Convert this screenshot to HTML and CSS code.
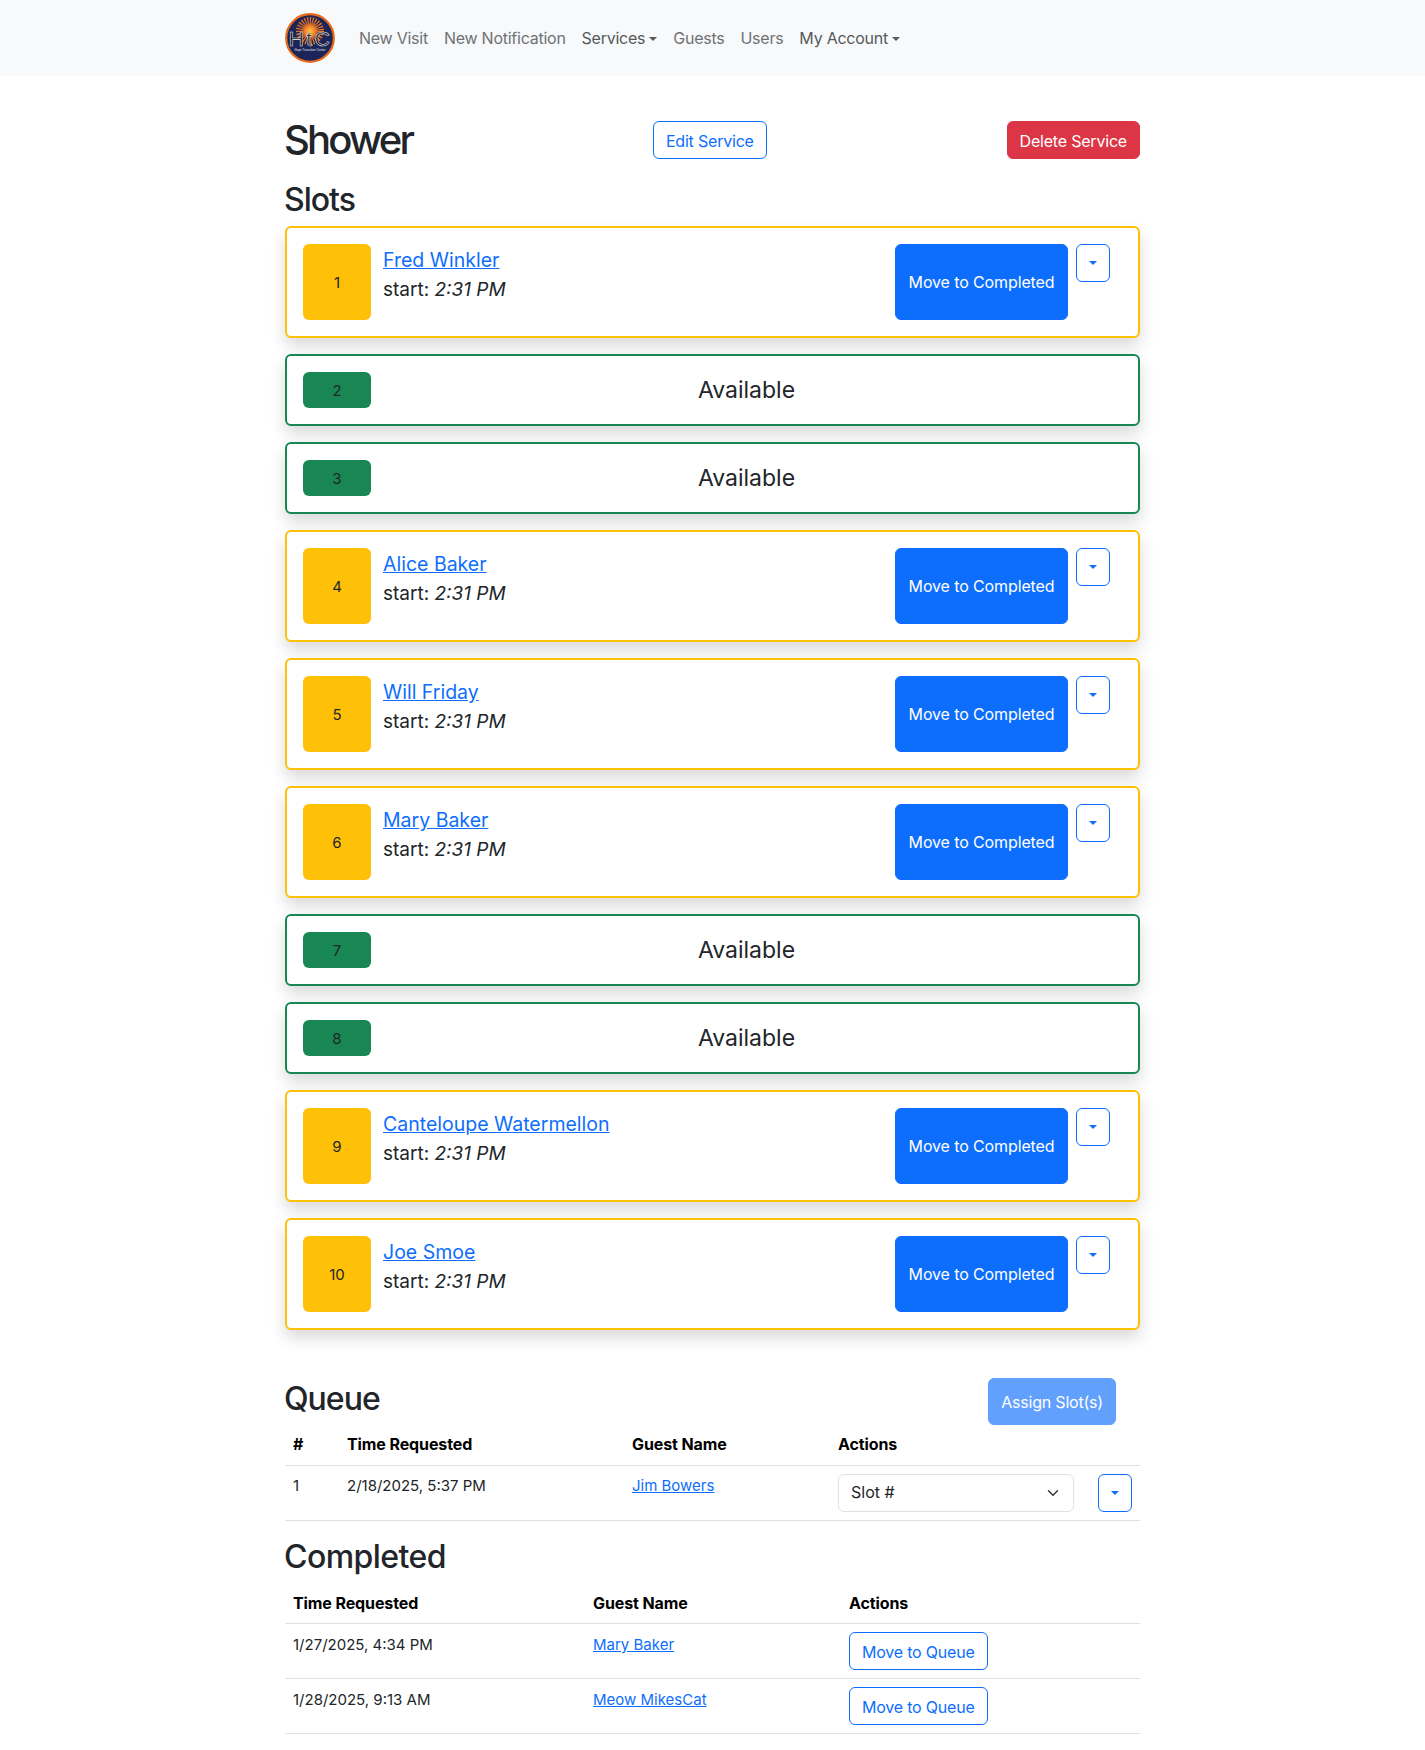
FILE: index.html
```html
<!DOCTYPE html>
<html lang="en">
<head>
<meta charset="utf-8">
<title>Shower</title>
<link rel="stylesheet" href="styles.css">
</head>
<body>
<nav class="navbar">
  <div class="wrap nav-inner">
    <svg class="logo" viewBox="0 0 50 50" role="img" aria-label="HTC">
      <defs>
        <radialGradient id="sun" cx="50%" cy="50%" r="50%">
          <stop offset="0" stop-color="#ffc04d"/>
          <stop offset="0.55" stop-color="#ef7d22"/>
          <stop offset="1" stop-color="#c9602a" stop-opacity="0"/>
        </radialGradient>
      </defs>
      <circle class="logo-disc" cx="25" cy="25" r="23.8"/>
      <circle class="logo-rays" cx="25" cy="18" r="9"/>
      <circle cx="25" cy="18" r="10" fill="url(#sun)"/>
      <text class="logo-text" x="25.5" y="33" text-anchor="middle">HtC</text>
      <text class="logo-sub" x="25" y="37.5" text-anchor="middle">Hope Transition Center</text>
    </svg>
    <a class="nav-link" href="#">New Visit</a>
    <a class="nav-link" href="#">New Notification</a>
    <a class="nav-link nav-dark caret-after" href="#">Services</a>
    <a class="nav-link" href="#">Guests</a>
    <a class="nav-link" href="#">Users</a>
    <a class="nav-link nav-dark caret-after" href="#">My Account</a>
  </div>
</nav>

<main class="wrap">
  <div class="title-row">
    <h1>Shower</h1>
    <a class="btn btn-outline" href="#">Edit Service</a>
    <a class="btn btn-danger" href="#">Delete Service</a>
  </div>

  <h2 class="slots-title">Slots</h2>
  <div class="slots">
    <div class="slot slot-busy">
      <div class="badge badge-busy">1</div>
      <div class="slot-info"><a class="guest" href="#">Fred Winkler</a><p class="start">start: <em>2:31 PM</em></p></div>
      <a class="btn btn-primary btn-complete" href="#">Move to Completed</a>
      <button class="btn btn-outline caret-btn" type="button"></button>
    </div>
    <div class="slot slot-free">
      <div class="badge badge-free">2</div>
      <div class="available">Available</div>
    </div>
    <div class="slot slot-free">
      <div class="badge badge-free">3</div>
      <div class="available">Available</div>
    </div>
    <div class="slot slot-busy">
      <div class="badge badge-busy">4</div>
      <div class="slot-info"><a class="guest" href="#">Alice Baker</a><p class="start">start: <em>2:31 PM</em></p></div>
      <a class="btn btn-primary btn-complete" href="#">Move to Completed</a>
      <button class="btn btn-outline caret-btn" type="button"></button>
    </div>
    <div class="slot slot-busy">
      <div class="badge badge-busy">5</div>
      <div class="slot-info"><a class="guest" href="#">Will Friday</a><p class="start">start: <em>2:31 PM</em></p></div>
      <a class="btn btn-primary btn-complete" href="#">Move to Completed</a>
      <button class="btn btn-outline caret-btn" type="button"></button>
    </div>
    <div class="slot slot-busy">
      <div class="badge badge-busy">6</div>
      <div class="slot-info"><a class="guest" href="#">Mary Baker</a><p class="start">start: <em>2:31 PM</em></p></div>
      <a class="btn btn-primary btn-complete" href="#">Move to Completed</a>
      <button class="btn btn-outline caret-btn" type="button"></button>
    </div>
    <div class="slot slot-free">
      <div class="badge badge-free">7</div>
      <div class="available">Available</div>
    </div>
    <div class="slot slot-free">
      <div class="badge badge-free">8</div>
      <div class="available">Available</div>
    </div>
    <div class="slot slot-busy">
      <div class="badge badge-busy">9</div>
      <div class="slot-info"><a class="guest" href="#">Canteloupe Watermellon</a><p class="start">start: <em>2:31 PM</em></p></div>
      <a class="btn btn-primary btn-complete" href="#">Move to Completed</a>
      <button class="btn btn-outline caret-btn" type="button"></button>
    </div>
    <div class="slot slot-busy">
      <div class="badge badge-busy">10</div>
      <div class="slot-info"><a class="guest" href="#">Joe Smoe</a><p class="start">start: <em>2:31 PM</em></p></div>
      <a class="btn btn-primary btn-complete" href="#">Move to Completed</a>
      <button class="btn btn-outline caret-btn" type="button"></button>
    </div>
  </div>

  <div class="queue-head">
    <h2 class="queue-title">Queue</h2>
    <a class="btn btn-primary btn-assign" href="#">Assign Slot(s)</a>
  </div>
  <table class="table table-queue">
    <thead>
      <tr><th class="q-num">#</th><th class="q-time">Time Requested</th><th class="q-guest">Guest Name</th><th>Actions</th></tr>
    </thead>
    <tbody>
      <tr>
        <td>1</td><td>2/18/2025, 5:37 PM</td><td><a href="#">Jim Bowers</a></td>
        <td>
          <div class="queue-actions">
            <select class="slot-select"><option>Slot #</option></select>
            <button class="btn btn-outline caret-btn" type="button"></button>
          </div>
        </td>
      </tr>
    </tbody>
  </table>

  <h2 class="completed-title">Completed</h2>
  <table class="table table-completed">
    <thead>
      <tr><th class="c-time">Time Requested</th><th class="c-guest">Guest Name</th><th>Actions</th></tr>
    </thead>
    <tbody>
      <tr><td>1/27/2025, 4:34 PM</td><td><a href="#">Mary Baker</a></td><td class="cell-action"><a class="btn btn-outline" href="#">Move to Queue</a></td></tr>
      <tr><td>1/28/2025, 9:13 AM</td><td><a href="#">Meow MikesCat</a></td><td class="cell-action"><a class="btn btn-outline" href="#">Move to Queue</a></td></tr>
    </tbody>
  </table>
</main>
</body>
</html>
```
FILE: styles.css
```css
* { box-sizing: border-box; }
html, body { margin: 0; padding: 0; }
body {
  font-family: "Inter", "Noto Sans", "Liberation Sans", sans-serif;
  font-size: 15px;
  line-height: 24px;
  color: #212529;
  background: #fff;
}
.wrap { width: 855px; margin: 0 auto; }
a { color: #0d6efd; }

.navbar { height: 76px; background: #f8f9fa; display: flex; align-items: center; }
.nav-inner { display: flex; align-items: center; }
.logo { width: 50px; height: 50px; margin-right: 16px; flex: none; }
.logo-disc { fill: #1b2559; stroke: #ea6a1c; stroke-width: 2.2px; }
.logo-rays { fill: none; stroke: #e9741f; stroke-width: 10px; stroke-dasharray: 1 1.1; }
.logo-text { font-family: "Liberation Sans", sans-serif; font-size: 21px; letter-spacing: 2.5px; fill: #05060d; stroke: #eef0f6; stroke-width: 0.55px; }
.logo-sub { font-family: "Liberation Sans", sans-serif; font-size: 3px; fill: #e3e5ee; }
.nav-link { padding: 8px; font-size: 16px; letter-spacing: -0.25px; color: #6f7275; text-decoration: none; white-space: nowrap; }
.nav-dark { color: #55595c; }
.caret-after::after {
  content: "";
  display: inline-block;
  margin-left: 4px;
  vertical-align: 3px;
  border-top: 4.8px solid currentColor;
  border-left: 4.8px solid transparent;
  border-right: 4.8px solid transparent;
}

.btn {
  display: inline-block;
  padding: 7px 12px 5px;
  font: inherit;
  font-size: 16px;
  letter-spacing: -0.2px;
  border: 1px solid transparent;
  border-radius: 6px;
  text-decoration: none;
  text-align: center;
  background: transparent;
  white-space: nowrap;
}
.btn-outline { color: #0d6efd; border-color: #0d6efd; }
.btn-danger { color: #fff; background: #dc3545; border-color: #dc3545; }
.btn-primary { color: #fff; background: #0d6efd; border-color: #0d6efd; }

.title-row { display: flex; justify-content: space-between; align-items: center; margin-top: 40px; margin-bottom: 17px; }
h1 { margin: 0 1px 0 -1px; font-size: 40px; line-height: 48px; font-weight: 500; letter-spacing: -2.8px; }
h2 { margin: 0 0 0 -1px; font-size: 32px; line-height: 38px; font-weight: 500; letter-spacing: -0.55px; }
.slots-title { margin-bottom: 7px; letter-spacing: -1px; }

.slots { display: flex; flex-direction: column; gap: 16px; }
.slot {
  display: flex;
  align-items: stretch;
  padding: 16px;
  background: #fff;
  border: 2px solid;
  border-radius: 6px;
  box-shadow: 0 8px 16px rgba(0, 0, 0, 0.15);
}
.slot-busy { border-color: #ffc107; }
.slot-free { border-color: #198754; }
.badge { flex: none; width: 68px; padding-top: 2px; display: flex; align-items: center; justify-content: center; border-radius: 6px; font-size: 15px; }
.badge-busy { background: #ffc107; }
.badge-free { background: #198754; height: 36px; }
.slot-info { flex: 1; margin-left: 12px; padding-top: 1px; font-size: 19px; line-height: 30px; }
.guest { display: block; width: fit-content; font-size: 19.5px; }
.start { margin: 0 0 15px; }
.available { flex: 1; margin-left: 12px; margin-right: 12px; text-align: center; font-size: 23px; line-height: 36px; }
.btn-complete { display: flex; align-items: center; width: 173px; justify-content: center; padding: 0; letter-spacing: -0.12px; }
.caret-btn { width: 34px; height: 38px; padding: 0; margin-left: 8px; display: inline-flex; align-items: center; justify-content: center; flex: none; }
.caret-btn::after {
  content: "";
  border-top: 4.8px solid #0d6efd;
  border-left: 4.8px solid transparent;
  border-right: 4.8px solid transparent;
}
.slot .caret-btn { margin-right: 12px; }

.queue-head { display: flex; justify-content: space-between; align-items: flex-start; margin-top: 50px; padding-right: 24px; }
.queue-title { letter-spacing: -1px; }
.btn-assign { padding: 10.5px 12px; opacity: 0.65; margin-top: -2px; }
.table { width: 100%; border-collapse: collapse; table-layout: fixed; }
.table th, .table td { padding: 8px; text-align: left; vertical-align: top; border-bottom: 1px solid #dee2e6; }
.table th { font-size: 16px; font-weight: 700; color: #000; letter-spacing: -0.1px; }
.table td { color: #212529; }
.table-queue th { padding: 7px 8px 9px; }
.table-completed td { padding-top: 9px; padding-bottom: 7px; }
.table-completed td.cell-action { padding-top: 8px; padding-bottom: 8px; }
.q-num { width: 54px; }
.q-time { width: 285px; }
.q-guest { width: 206px; }
.c-time { width: 300px; }
.c-guest { width: 256px; }
.queue-actions { display: flex; align-items: center; justify-content: space-between; }
.slot-select {
  appearance: none;
  width: 236px;
  height: 38px;
  padding: 4px 36px 6px 12px;
  font: inherit;
  font-size: 16px;
  color: #212529;
  background: #fff url("data:image/svg+xml,%3csvg xmlns='http://www.w3.org/2000/svg' viewBox='0 0 16 16'%3e%3cpath fill='none' stroke='%23343a40' stroke-linecap='round' stroke-linejoin='round' stroke-width='2' d='m2 5 6 6 6-6'/%3e%3c/svg%3e") no-repeat right 12px center / 16px 12px;
  border: 1px solid #dee2e6;
  border-radius: 6px;
}
.queue-actions .caret-btn { margin: 0; }
.completed-title { margin-top: 17px; margin-bottom: 7px; }
```
